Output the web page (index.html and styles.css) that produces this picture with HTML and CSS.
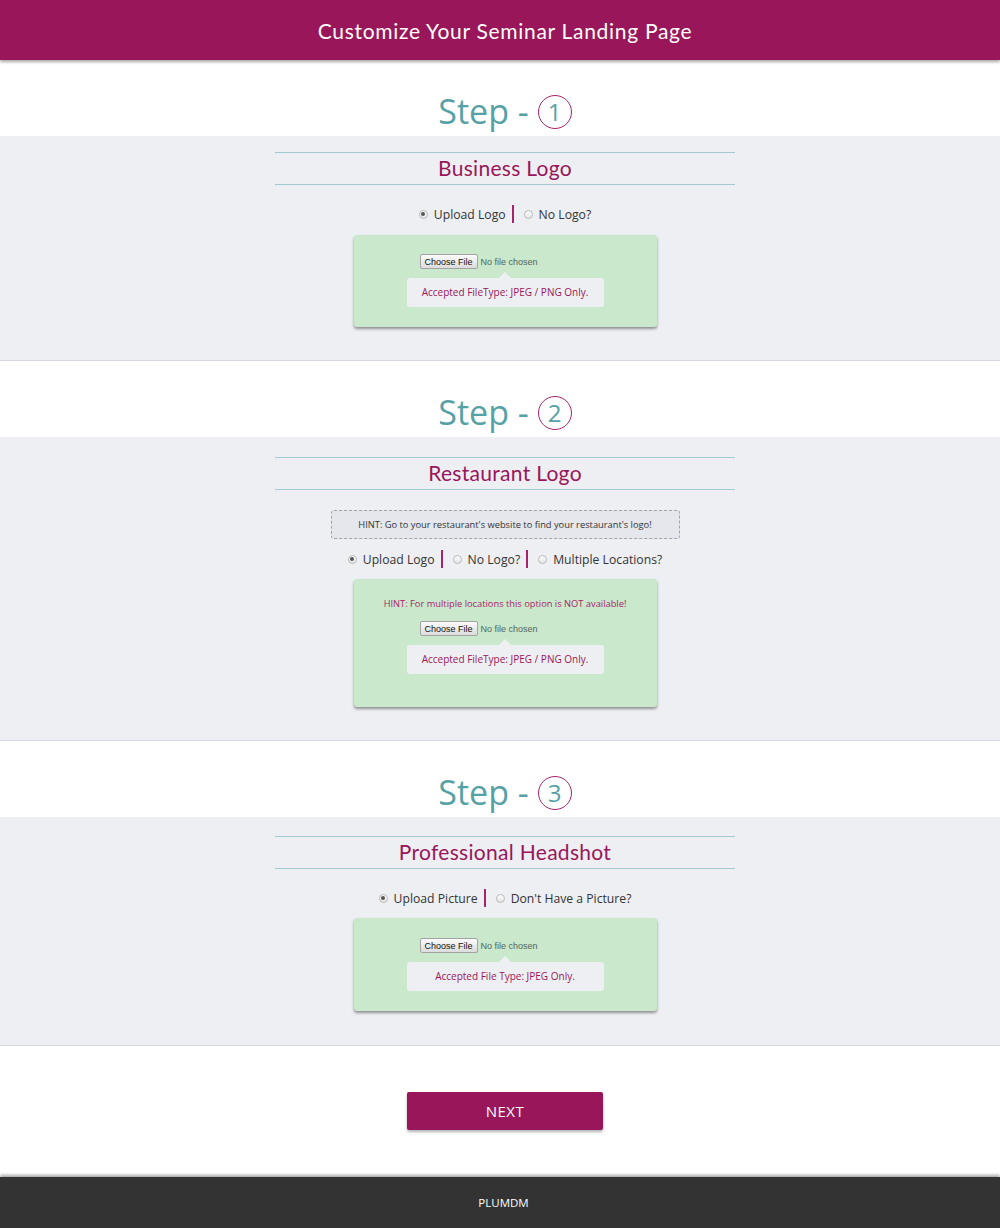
FILE: index.html
```html
<!DOCTYPE html>
<html lang="en">
<head>
<meta charset="utf-8">
<title>Customize Your Seminar Landing Page</title>
<link rel="stylesheet" href="styles.css">
</head>
<body>
<header class="topbar">
  <h1 class="topbar-title">Customize Your Seminar Landing Page</h1>
</header>

<main>
  <div class="step"><span class="step-label">Step - </span><span class="step-num">1</span></div>
  <section class="panel panel-1">
    <div class="inner">
      <h2 class="panel-title">Business Logo</h2>
      <div class="radios">
        <label class="opt"><span class="radio checked"></span>Upload Logo</label>
        <span class="sep"></span>
        <label class="opt"><span class="radio"></span>No Logo?</label>
      </div>
      <div class="upload">
        <div class="file"><span class="file-btn">Choose File</span><span class="file-text">No file chosen</span></div>
        <div class="tip">Accepted FileType: JPEG / PNG Only.</div>
      </div>
    </div>
  </section>

  <div class="step"><span class="step-label">Step - </span><span class="step-num">2</span></div>
  <section class="panel panel-2">
    <div class="inner">
      <h2 class="panel-title">Restaurant Logo</h2>
      <div class="hint">HINT: Go to your restaurant's website to find your restaurant's logo!</div>
      <div class="radios radios-tight">
        <label class="opt"><span class="radio checked"></span>Upload Logo</label>
        <span class="sep"></span>
        <label class="opt"><span class="radio"></span>No Logo?</label>
        <span class="sep"></span>
        <label class="opt"><span class="radio"></span>Multiple Locations?</label>
      </div>
      <div class="upload upload-2">
        <p class="upload-hint">HINT: For multiple locations this option is NOT available!</p>
        <div class="file"><span class="file-btn">Choose File</span><span class="file-text">No file chosen</span></div>
        <div class="tip">Accepted FileType: JPEG / PNG Only.</div>
      </div>
    </div>
  </section>

  <div class="step"><span class="step-label">Step - </span><span class="step-num">3</span></div>
  <section class="panel panel-3">
    <div class="inner">
      <h2 class="panel-title">Professional Headshot</h2>
      <div class="radios">
        <label class="opt"><span class="radio checked"></span>Upload Picture</label>
        <span class="sep"></span>
        <label class="opt"><span class="radio"></span>Don't Have a Picture?</label>
      </div>
      <div class="upload upload-3">
        <div class="file"><span class="file-btn">Choose File</span><span class="file-text">No file chosen</span></div>
        <div class="tip">Accepted File Type: JPEG Only.</div>
      </div>
    </div>
  </section>

  <div class="actions">
    <button class="next" type="button">NEXT</button>
  </div>
</main>

<footer class="footer">PLUMDM</footer>
</body>
</html>
```

FILE: styles.css
```css
* { box-sizing: border-box; }

html, body {
  margin: 0;
  padding: 0;
  background: #ffffff;
  font-family: "Open Sans", "Liberation Sans", sans-serif;
  color: #333333;
}

.topbar {
  height: 60px;
  background: #99165a;
  box-shadow: 0 2px 3px rgba(0, 0, 0, 0.35);
  padding-left: 10px;
  display: flex;
  align-items: center;
  justify-content: center;
  position: relative;
  z-index: 2;
}

.topbar-title {
  margin: 0;
  font-family: "Lato", "Open Sans", sans-serif;
  font-weight: 400;
  font-size: 21px;
  letter-spacing: 0.7px;
  color: #ffffff;
}

.step {
  height: 76px;
  padding: 31px 0 0 10px;
  display: flex;
  justify-content: center;
  align-items: center;
  align-content: flex-start;
  flex-wrap: wrap;
}

.step-label {
  font-size: 34px;
  line-height: 40px;
  color: #55a1a6;
  white-space: pre;
}

.step-num {
  width: 34px;
  height: 34px;
  border: 1.5px solid #a8236a;
  border-radius: 50%;
  display: flex;
  align-items: center;
  justify-content: center;
  font-size: 24px;
  line-height: 1;
  color: #55a1a6;
  margin-top: 2px;
}

.panel {
  background: #eeeff3;
  border-bottom: 1px solid #d3d8e3;
  padding-left: 10px;
}

.panel-1 { padding-top: 16px; padding-bottom: 33px; }
.panel-2 { padding-top: 20px; padding-bottom: 33px; }
.panel-3 { padding-top: 19px; padding-bottom: 34px; }

.inner {
  width: 460px;
  margin: 0 auto;
  display: flex;
  flex-direction: column;
  align-items: center;
}

.panel-title {
  width: 460px;
  margin: 0;
  height: 33px;
  border-top: 1px solid #9fcbd2;
  border-bottom: 1px solid #9fcbd2;
  font-family: "Lato", "Open Sans", sans-serif;
  font-weight: 400;
  font-size: 21px;
  letter-spacing: 0.3px;
  line-height: 30px;
  text-align: center;
  color: #99165a;
}

.radios {
  margin-top: 19px;
  height: 20px;
  display: flex;
  align-items: center;
  justify-content: center;
  font-size: 12.2px;
  color: #333333;
}

.radios-tight { margin-top: 10px; }

.opt {
  display: flex;
  align-items: center;
  gap: 6px;
}

.radio {
  width: 9px;
  height: 9px;
  border-radius: 50%;
  border: 1px solid #b9b9b9;
  background: linear-gradient(#ffffff, #e4e4e4);
  position: relative;
}

.radio.checked::after {
  content: "";
  position: absolute;
  left: 1.5px;
  top: 1.5px;
  width: 4px;
  height: 4px;
  border-radius: 50%;
  background: #555555;
}

.sep {
  width: 2px;
  height: 18px;
  background: #a8236a;
  margin: 0 10px 0 6px;
}

.upload {
  width: 303px;
  margin-top: 11px;
  background: #c9e8cc;
  border-radius: 3px;
  box-shadow: 0 2px 3px rgba(0, 0, 0, 0.4);
  padding: 19px 0 20px;
  display: flex;
  flex-direction: column;
  align-items: center;
}

.upload-2 { margin-top: 10px; padding-top: 17px; padding-bottom: 33px; }
.upload-3 { margin-top: 10px; padding-top: 20px; }

.upload-hint {
  margin: 0 0 9px;
  font-size: 9.3px;
  line-height: 16px;
  color: #a8236a;
}

.file {
  width: 171px;
  height: 15px;
  display: flex;
  align-items: center;
  font-family: "Liberation Sans", Arial, sans-serif;
  font-size: 9px;
}

.file-btn {
  height: 15px;
  padding: 0 4px;
  border: 1px solid #a3a3a3;
  border-radius: 2px;
  background: linear-gradient(#fbfbfb, #dcdcdc);
  color: #111111;
  display: flex;
  align-items: center;
}

.file-text {
  margin-left: 3px;
  color: #56655a;
}

.tip {
  position: relative;
  margin-top: 9px;
  width: 197px;
  height: 29px;
  background: #eeeff3;
  border-radius: 3px;
  font-size: 10px;
  line-height: 29px;
  text-align: center;
  color: #99165a;
}

.tip::before {
  content: "";
  position: absolute;
  left: 92px;
  top: -6px;
  border-left: 6px solid transparent;
  border-right: 6px solid transparent;
  border-bottom: 6px solid #eeeff3;
}

.hint {
  width: 349px;
  height: 29px;
  margin-top: 20px;
  border: 1px dashed #a0a4ab;
  border-radius: 3px;
  background: #e5e7ed;
  font-size: 9.3px;
  line-height: 27px;
  text-align: center;
  color: #333333;
}

.actions {
  height: 131px;
  padding: 46px 0 0 10px;
  display: flex;
  justify-content: center;
  align-items: flex-start;
}

.next {
  width: 196px;
  height: 38px;
  border: none;
  border-radius: 2px;
  background: #99165a;
  box-shadow: 0 2px 3px rgba(0, 0, 0, 0.3);
  color: #ffffff;
  font-family: "Open Sans", sans-serif;
  font-size: 15px;
  letter-spacing: 0.5px;
  cursor: pointer;
}

.footer {
  height: 51px;
  background: #333333;
  box-shadow: 0 -2px 3px rgba(0, 0, 0, 0.35);
  padding-left: 7px;
  display: flex;
  align-items: center;
  justify-content: center;
  font-size: 11.5px;
  color: #ffffff;
}
```
